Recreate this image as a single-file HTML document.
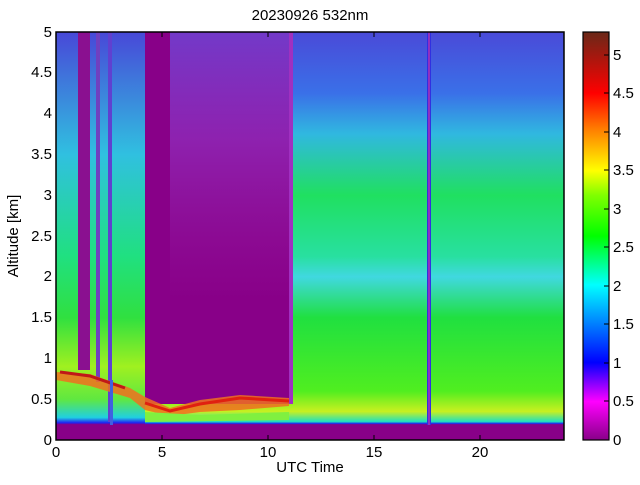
<!DOCTYPE html>
<html><head><style>
body{margin:0;background:#fff;}
svg text{font-family:"Liberation Sans",sans-serif;font-size:15px;fill:#000;}
</style></head><body>
<svg width="640" height="480" viewBox="0 0 640 480" xmlns="http://www.w3.org/2000/svg">
<defs>
<linearGradient id="bg" x1="0" y1="32" x2="0" y2="440" gradientUnits="userSpaceOnUse">
<stop offset="0" stop-color="#4a4ad8"/>
<stop offset="0.15" stop-color="#3a70e8"/>
<stop offset="0.25" stop-color="#30b8e0"/>
<stop offset="0.4" stop-color="#20e060"/>
<stop offset="0.55" stop-color="#28e0a0"/>
<stop offset="0.6" stop-color="#40d8e0"/>
<stop offset="0.7" stop-color="#20e040"/>
<stop offset="0.88" stop-color="#50ee20"/>
<stop offset="0.93" stop-color="#c8f020"/>
<stop offset="0.955" stop-color="#20e0c0"/>
<stop offset="0.96" stop-color="#2020f0"/>
<stop offset="0.962" stop-color="#880088"/>
<stop offset="1" stop-color="#880088"/>
</linearGradient>
<linearGradient id="lf" x1="0" y1="32" x2="0" y2="440" gradientUnits="userSpaceOnUse">
<stop offset="0" stop-color="#4848d8"/>
<stop offset="0.3" stop-color="#30c0e0"/>
<stop offset="0.55" stop-color="#20e080"/>
<stop offset="0.7" stop-color="#30e040"/>
<stop offset="0.82" stop-color="#a0f020"/>
<stop offset="0.9" stop-color="#60e840"/>
<stop offset="0.945" stop-color="#20d0e0"/>
<stop offset="0.958" stop-color="#2020f0"/>
<stop offset="0.962" stop-color="#880088"/>
<stop offset="1" stop-color="#880088"/>
</linearGradient>
<linearGradient id="pb" x1="0" y1="32" x2="0" y2="300" gradientUnits="userSpaceOnUse">
<stop offset="0" stop-color="#7040d0" stop-opacity="0.9"/>
<stop offset="0.4" stop-color="#9030c0" stop-opacity="0.7"/>
<stop offset="1" stop-color="#9a20a8" stop-opacity="0"/>
</linearGradient>
<linearGradient id="cb" x1="0" y1="440" x2="0" y2="32" gradientUnits="userSpaceOnUse">
<stop offset="0" stop-color="#880088"/>
<stop offset="0.094" stop-color="#ff00ff"/>
<stop offset="0.19" stop-color="#0000ff"/>
<stop offset="0.38" stop-color="#00ffff"/>
<stop offset="0.5" stop-color="#00ff00"/>
<stop offset="0.6" stop-color="#80ff00"/>
<stop offset="0.66" stop-color="#ffff00"/>
<stop offset="0.76" stop-color="#ff8000"/>
<stop offset="0.85" stop-color="#ff0000"/>
<stop offset="1" stop-color="#6a2818"/>
</linearGradient>
</defs>
<rect x="56" y="32" width="508" height="408" fill="url(#bg)"/>
<rect x="56" y="32" width="89" height="408" fill="url(#lf)"/>
<rect x="78" y="32" width="12" height="338" fill="#8a1090"/>
<rect x="96" y="32" width="4" height="350" fill="#7040c0"/>
<rect x="108" y="32" width="4" height="390" fill="#6040d0"/>
<rect x="145" y="32" width="144" height="372" fill="#880088"/>
<rect x="170" y="32" width="119" height="268" fill="url(#pb)"/>
<rect x="289" y="32" width="4" height="372" fill="#a030c0"/>
<path d="M56 372 L90 374 L130 388 L145 397 L170 408 L200 400 L240 395 L289 398 L289 406 L240 410 L200 412 L170 416 L145 410 L130 398 L90 386 L56 380Z" fill="#f07020" opacity="0.85"/>
<path d="M145 403 L170 411 L200 404 L240 398 L289 401" stroke="#e02010" stroke-width="3" fill="none"/>
<path d="M60 372 L90 376 L125 388" stroke="#c01818" stroke-width="3" fill="none"/>
<path d="M145 412 L200 415 L289 412 L289 420 L145 422Z" fill="#80f040"/>
<rect x="427" y="32" width="4" height="393" fill="#3030e0"/>
<rect x="428" y="32" width="2" height="393" fill="#9030c0"/>
<rect x="110" y="380" width="3" height="45" fill="#4060e0"/>
<rect x="56" y="32" width="508" height="408" fill="none" stroke="#000" stroke-width="1.5"/>
<g stroke="#000" stroke-width="1">
<line x1="162" y1="440" x2="162" y2="435"/><line x1="268" y1="440" x2="268" y2="435"/><line x1="374" y1="440" x2="374" y2="435"/><line x1="480" y1="440" x2="480" y2="435"/>
<line x1="162" y1="32" x2="162" y2="37"/><line x1="268" y1="32" x2="268" y2="37"/><line x1="374" y1="32" x2="374" y2="37"/><line x1="480" y1="32" x2="480" y2="37"/>
</g>
<g text-anchor="middle">
<text x="56" y="457">0</text><text x="162" y="457">5</text><text x="268" y="457">10</text><text x="374" y="457">15</text><text x="480" y="457">20</text>
<text x="310" y="472">UTC Time</text>
<text x="310" y="20">20230926 532nm</text>
</g>
<g text-anchor="end">
<text x="52" y="445">0</text><text x="52" y="404">0.5</text><text x="52" y="363">1</text><text x="52" y="322">1.5</text><text x="52" y="281">2</text><text x="52" y="241">2.5</text><text x="52" y="200">3</text><text x="52" y="159">3.5</text><text x="52" y="118">4</text><text x="52" y="77">4.5</text><text x="52" y="37">5</text>
</g>
<text transform="translate(18,236) rotate(-90)" text-anchor="middle">Altitude [km]</text>
<rect x="583" y="32" width="26" height="408" fill="url(#cb)" stroke="#000" stroke-width="1.2"/>
<g text-anchor="start">
<text x="613" y="445">0</text><text x="613" y="406">0.5</text><text x="613" y="368">1</text><text x="613" y="329">1.5</text><text x="613" y="291">2</text><text x="613" y="252">2.5</text><text x="613" y="214">3</text><text x="613" y="175">3.5</text><text x="613" y="137">4</text><text x="613" y="98">4.5</text><text x="613" y="60">5</text>
</g>
<g stroke="#000">
<line x1="604" y1="401" x2="609" y2="401"/><line x1="604" y1="363" x2="609" y2="363"/><line x1="604" y1="324" x2="609" y2="324"/><line x1="604" y1="286" x2="609" y2="286"/><line x1="604" y1="247" x2="609" y2="247"/><line x1="604" y1="209" x2="609" y2="209"/><line x1="604" y1="170" x2="609" y2="170"/><line x1="604" y1="132" x2="609" y2="132"/><line x1="604" y1="93" x2="609" y2="93"/><line x1="604" y1="55" x2="609" y2="55"/>
</g>
</svg>
</body></html>
